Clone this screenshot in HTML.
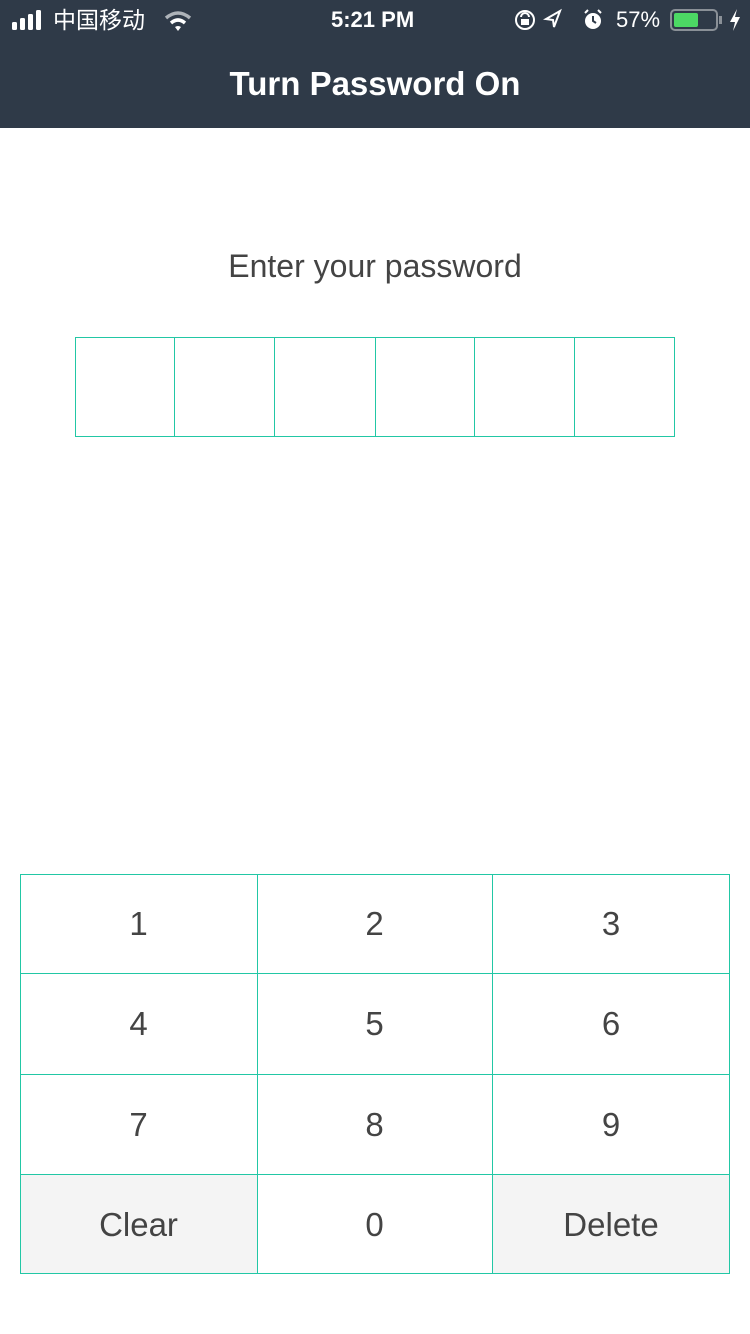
<!DOCTYPE html>
<html><head><meta charset="utf-8"><style>
*{margin:0;padding:0;box-sizing:border-box}
body{width:750px;height:1334px;background:#fff;font-family:"Liberation Sans","Noto Sans CJK SC",sans-serif;position:relative;overflow:hidden}
#hdr{position:absolute;left:0;top:0;width:750px;height:128px;background:#2f3a48;color:#fff}
.t{position:absolute;white-space:nowrap}
.line{position:absolute;background:#22c7a5}
.k{position:absolute;display:flex;align-items:center;justify-content:center;font-size:33px;color:#444}
</style></head><body>
<div id="hdr">
 <svg class="t" style="left:12px;top:10px" width="34" height="20"><rect x="0" y="12" width="5" height="8" rx="1.5" fill="#fff"/><rect x="8" y="8" width="5" height="12" rx="1.5" fill="#fff"/><rect x="16" y="4" width="5" height="16" rx="1.5" fill="#fff"/><rect x="24" y="0" width="5" height="20" rx="1.5" fill="#fff"/></svg>
 <div class="t" style="left:53px;top:4px;font-size:23px;line-height:32px">中国移动</div>
 <svg class="t" style="left:164px;top:10px" width="28" height="22"><path d="M2 8 Q14 -2 26 8" stroke="#aeb3b9" stroke-width="3.5" fill="none"/><path d="M7 13 Q14 7 21 13" stroke="#fff" stroke-width="3.5" fill="none"/><path d="M11 17 L14 21 L17 17 Q14 15 11 17Z" fill="#fff"/></svg>
 <div class="t" style="left:331px;top:7px;font-size:22px;font-weight:bold">5:21 PM</div>
 <svg class="t" style="left:514px;top:8px" width="90" height="24"><circle cx="11" cy="12" r="9" stroke="#fff" stroke-width="2" fill="none"/><rect x="7" y="11" width="8" height="6" fill="#fff"/><path d="M7 9 A4 4 0 0 1 15 9" stroke="#fff" stroke-width="2" fill="none"/><path d="M46 3 L32 11 L39 12 L40 19Z" stroke="#fff" stroke-width="2" fill="none"/><circle cx="79" cy="13" r="8" fill="#fff"/><path d="M71 5 L74 2 M87 5 L84 2" stroke="#fff" stroke-width="2"/><path d="M79 8 L79 13 L82 15" stroke="#2f3a48" stroke-width="2" fill="none"/></svg>
 <div class="t" style="left:616px;top:7px;font-size:22px">57%</div>
 <div class="t" style="left:670px;top:9px;width:48px;height:22px;border:2px solid #8a9097;border-radius:5px"><div style="position:absolute;left:2px;top:2px;width:24px;height:14px;background:#4cd964;border-radius:2px"></div></div>
 <div class="t" style="left:719px;top:16px;width:3px;height:8px;background:#8a9097"></div>
 <svg class="t" style="left:728px;top:9px" width="14" height="22"><path d="M9 0 L2 13 L7 13 L5 22 L12 8 L7 8Z" fill="#fff"/></svg>
 <div class="t" style="left:0;width:750px;text-align:center;top:65px;font-size:33px;font-weight:bold">Turn Password On</div>
</div>
<div class="t" style="left:0;width:750px;text-align:center;top:248px;font-size:32px;color:#444">Enter your password</div>
<div style="position:absolute;left:75px;top:337px;width:600px;height:100px;border:1px solid #22c7a5"></div>
<div class="line" style="left:174px;top:337px;width:1px;height:100px"></div>
<div class="line" style="left:274px;top:337px;width:1px;height:100px"></div>
<div class="line" style="left:375px;top:337px;width:1px;height:100px"></div>
<div class="line" style="left:474px;top:337px;width:1px;height:100px"></div>
<div class="line" style="left:574px;top:337px;width:1px;height:100px"></div>

<div style="position:absolute;left:20px;top:1174px;width:237px;height:100px;background:#f4f4f4"></div>
<div style="position:absolute;left:492px;top:1174px;width:238px;height:100px;background:#f4f4f4"></div>
<div style="position:absolute;left:20px;top:874px;width:710px;height:400px;border:1px solid #22c7a5"></div>
<div class="line" style="left:257px;top:874px;width:1px;height:400px"></div>
<div class="line" style="left:492px;top:874px;width:1px;height:400px"></div>
<div class="line" style="left:20px;top:973px;width:710px;height:1px"></div>
<div class="line" style="left:20px;top:1074px;width:710px;height:1px"></div>
<div class="line" style="left:20px;top:1174px;width:710px;height:1px"></div>

<div class="k" style="left:20px;top:874px;width:237px;height:99px">1</div>
<div class="k" style="left:257px;top:874px;width:235px;height:99px">2</div>
<div class="k" style="left:492px;top:874px;width:238px;height:99px">3</div>
<div class="k" style="left:20px;top:974px;width:237px;height:100px">4</div>
<div class="k" style="left:257px;top:974px;width:235px;height:100px">5</div>
<div class="k" style="left:492px;top:974px;width:238px;height:100px">6</div>
<div class="k" style="left:20px;top:1075px;width:237px;height:99px">7</div>
<div class="k" style="left:257px;top:1075px;width:235px;height:99px">8</div>
<div class="k" style="left:492px;top:1075px;width:238px;height:99px">9</div>
<div class="k" style="left:20px;top:1175px;width:237px;height:99px;font-size:33px">Clear</div>
<div class="k" style="left:257px;top:1175px;width:235px;height:99px">0</div>
<div class="k" style="left:492px;top:1175px;width:238px;height:99px;font-size:33px">Delete</div>
</body></html>
